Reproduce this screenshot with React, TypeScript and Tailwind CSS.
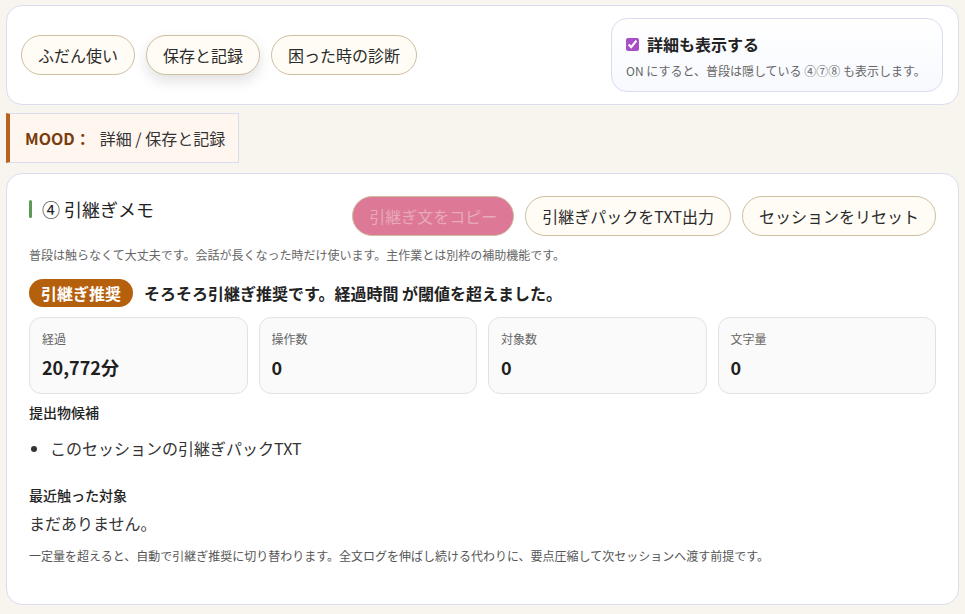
import { useState } from "react";

const font = {
  fontFamily: '"Noto Sans CJK JP", "Noto Sans", sans-serif',
};

type Stat = { label: string; value: string };

const stats: Stat[] = [
  { label: "経過", value: "20,772分" },
  { label: "操作数", value: "0" },
  { label: "対象数", value: "0" },
  { label: "文字量", value: "0" },
];

export default function App() {
  const [showDetail, setShowDetail] = useState(true);
  const [tab, setTab] = useState("保存と記録");
  const tabs = ["ふだん使い", "保存と記録", "困った時の診断"];

  return (
    <div
      className="min-h-[614px] bg-[#f8f5ee] px-[6px] pt-[5px] pb-[8px] text-[#222]"
      style={font}
    >
      {/* top bar */}
      <section className="h-[100px] bg-white border border-[#dcdcef] rounded-[16px] pl-[14px] pr-[15px] flex items-center justify-between">
        <div className="flex items-center gap-[11px]">
          {tabs.map((t) => (
            <button
              key={t}
              onClick={() => setTab(t)}
              className={`h-[40px] px-[16px] rounded-full border border-[#cdbf9f] bg-[#fffcf5] text-[16px] text-[#2a2a2a] ${
                tab === t ? "shadow-[0_6px_14px_rgba(0,0,0,0.12)]" : ""
              }`}
            >
              {t}
            </button>
          ))}
        </div>
        <div className="w-[332px] h-[74px] rounded-[16px] border border-[#dadcee] bg-gradient-to-b from-white to-[#f7f9fe] px-[14px] pt-[13px]">
          <label className="flex items-center gap-[8px] text-[16px] font-bold leading-[24px] text-[#222]">
            <input
              type="checkbox"
              checked={showDetail}
              onChange={() => setShowDetail((v) => !v)}
              className="w-[13px] h-[13px] accent-[#a64fc6]"
            />
            詳細も表示する
          </label>
          <p className="mt-[6px] text-[12px] leading-[18px] text-[#666]">
            ON にすると、普段は隠している ④⑦⑧ も表示します。
          </p>
        </div>
      </section>

      {/* mood */}
      <div className="mt-[8px] inline-flex items-center h-[50px] pl-[15px] pr-[13px] bg-[#fff6f0] border border-[#dcdcef] border-l-[4px] border-l-[#b8621c] text-[16px]">
        <span className="font-bold text-[#7a3c0c]">MOOD：</span>
        <span className="ml-[9px] text-[#333]">詳細 / 保存と記録</span>
      </div>

      {/* handoff memo */}
      <section className="mt-[10px] bg-white border border-[#dcdcef] rounded-[16px] px-[22px] pt-[22px] pb-[39px]">
        <div className="flex items-start justify-between">
          <h2 className="mt-[3px] flex items-center gap-[10px] text-[18px] leading-[20px] font-normal text-[#222]">
            <span className="w-[3px] h-[18px] bg-[#5c9a5a] rounded-sm" />
            ④ 引継ぎメモ
          </h2>
          <div className="flex items-center gap-[11px]">
            <button
              disabled
              className="h-[40px] px-[16px] rounded-full border border-[#cdbf9f] bg-[#dd7896] text-[16px] text-[#e8a9bb]"
            >
              引継ぎ文をコピー
            </button>
            <button className="h-[40px] px-[16px] rounded-full border border-[#cdbf9f] bg-[#fffcf5] text-[16px] text-[#2a2a2a]">
              引継ぎパックをTXT出力
            </button>
            <button className="h-[40px] px-[16px] rounded-full border border-[#cdbf9f] bg-[#fffcf5] text-[16px] text-[#2a2a2a]">
              セッションをリセット
            </button>
          </div>
        </div>

        <p className="mt-[10px] text-[12px] leading-[18px] text-[#666]">
          普段は触らなくて大丈夫です。会話が長くなった時だけ使います。主作業とは別枠の補助機能です。
        </p>

        <div className="mt-[15px] flex items-center gap-[11px]">
          <span className="h-[28px] px-[12px] rounded-full bg-[#b5600d] text-white text-[16px] font-bold flex items-center">
            引継ぎ推奨
          </span>
          <span className="text-[16px] font-bold text-[#222]">
            そろそろ引継ぎ推奨です。経過時間 が閾値を超えました。
          </span>
        </div>

        <div className="mt-[10px] grid grid-cols-4 gap-[11px]">
          {stats.map((s) => (
            <div
              key={s.label}
              className="h-[77px] rounded-[12px] border border-[#e2e2e2] bg-[#fafafa] px-[12px] pt-[12px]"
            >
              <div className="text-[12px] leading-[18px] text-[#666]">{s.label}</div>
              <div className="mt-[7px] text-[18px] leading-[24px] font-bold text-[#1f1f1f]">
                {s.value}
              </div>
            </div>
          ))}
        </div>

        <h3 className="mt-[8px] text-[14px] leading-[20px] font-medium text-[#222]">提出物候補</h3>
        <ul className="mt-[14px] list-disc pl-[21px] text-[16px] leading-[24px] text-[#333]">
          <li>このセッションの引継ぎパックTXT</li>
        </ul>

        <h3 className="mt-[25px] text-[14px] leading-[20px] font-medium text-[#222]">最近触った対象</h3>
        <p className="mt-[6px] text-[16px] leading-[24px] text-[#333]">まだありません。</p>
        <p className="mt-[12px] text-[12px] leading-[18px] text-[#555]">
          一定量を超えると、自動で引継ぎ推奨に切り替わります。全文ログを伸ばし続ける代わりに、要点圧縮して次セッションへ渡す前提です。
        </p>
      </section>
    </div>
  );
}
